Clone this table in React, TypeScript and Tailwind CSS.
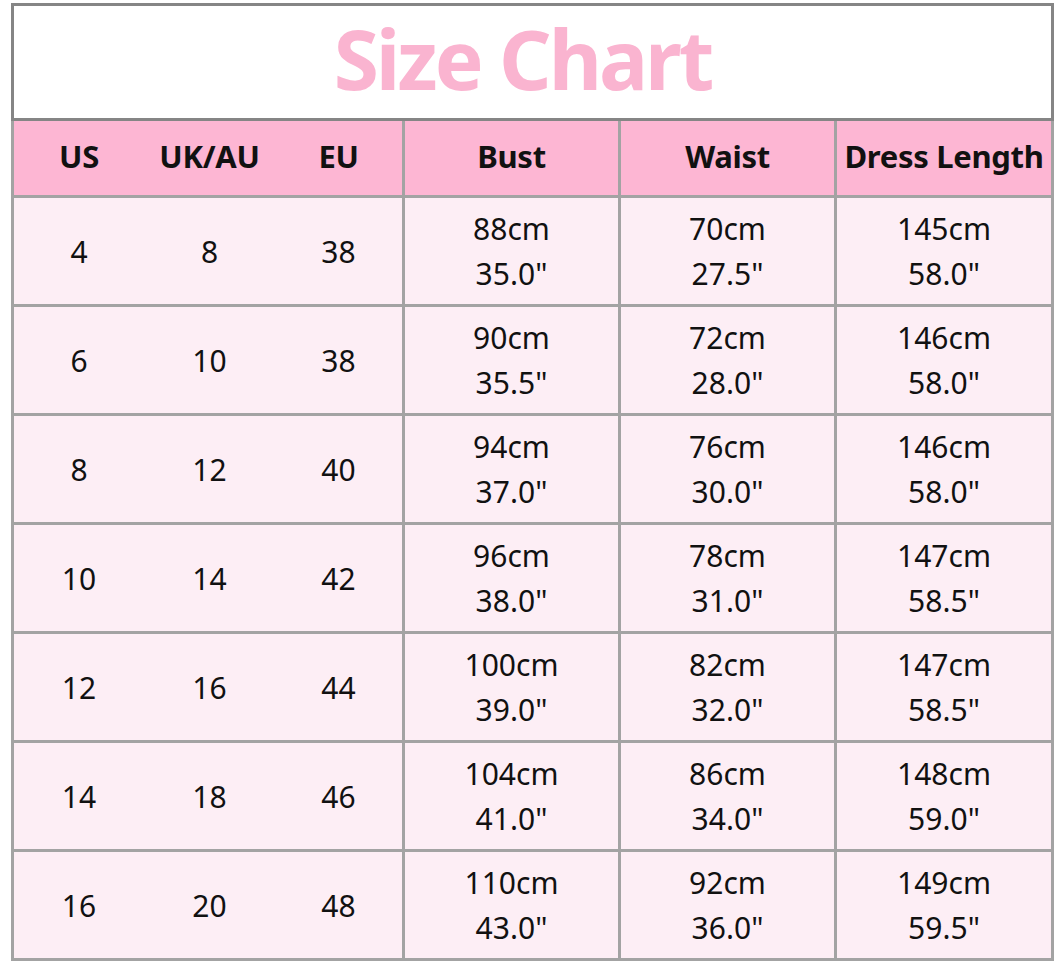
const rows = [
  { us: "4", uk: "8", eu: "38", bust: ["88cm", '35.0"'], waist: ["70cm", '27.5"'], length: ["145cm", '58.0"'] },
  { us: "6", uk: "10", eu: "38", bust: ["90cm", '35.5"'], waist: ["72cm", '28.0"'], length: ["146cm", '58.0"'] },
  { us: "8", uk: "12", eu: "40", bust: ["94cm", '37.0"'], waist: ["76cm", '30.0"'], length: ["146cm", '58.0"'] },
  { us: "10", uk: "14", eu: "42", bust: ["96cm", '38.0"'], waist: ["78cm", '31.0"'], length: ["147cm", '58.5"'] },
  { us: "12", uk: "16", eu: "44", bust: ["100cm", '39.0"'], waist: ["82cm", '32.0"'], length: ["147cm", '58.5"'] },
  { us: "14", uk: "18", eu: "46", bust: ["104cm", '41.0"'], waist: ["86cm", '34.0"'], length: ["148cm", '59.0"'] },
  { us: "16", uk: "20", eu: "48", bust: ["110cm", '43.0"'], waist: ["92cm", '36.0"'], length: ["149cm", '59.5"'] },
];

function TwoLine({ lines }: { lines: string[] }) {
  return (
    <div className="flex h-[106px] flex-col items-center justify-center bg-[#fdeef5] leading-[45px]">
      <span>{lines[0]}</span>
      <span>{lines[1]}</span>
    </div>
  );
}

export default function App() {
  return (
    <main className="min-h-screen bg-white font-['Noto_Sans',sans-serif] text-[#111]">
      <div className="ml-[11px] w-[1043px] pt-[3px]">
        {/* title */}
        <div className="flex h-[118px] items-center justify-center border-[3px] border-[#858585] bg-white pb-[8px] pr-[20px]">
          <h1 className="text-[82px] font-bold tracking-[-3px] text-[#fab4d0]">Size Chart</h1>
        </div>

        {/* table */}
        <div className="grid grid-cols-[388px_213px_213px_214px] gap-[3px] bg-[#a3a3a3] px-[3px] pb-[3px] text-[30px]">
          <div className="grid h-[74px] grid-cols-[130px_131px_127px] items-center bg-[#fdb6d3] pb-[3px] text-center text-[31px] font-bold tracking-[-0.3px]">
            <span>US</span>
            <span>UK/AU</span>
            <span>EU</span>
          </div>
          <div className="flex h-[74px] items-center justify-center bg-[#fdb6d3] pb-[3px] text-[31px] font-bold tracking-[-0.3px]">Bust</div>
          <div className="flex h-[74px] items-center justify-center bg-[#fdb6d3] pb-[3px] text-[31px] font-bold tracking-[-0.3px]">Waist</div>
          <div className="flex h-[74px] items-center justify-center whitespace-nowrap bg-[#fdb6d3] pb-[3px] text-[31px] font-bold tracking-[-0.3px]">
            Dress Length
          </div>

          {rows.map((r) => (
            <div key={r.us} className="contents">
              <div className="grid h-[106px] grid-cols-[130px_131px_127px] items-center bg-[#fdeef5] text-center">
                <span>{r.us}</span>
                <span>{r.uk}</span>
                <span>{r.eu}</span>
              </div>
              <TwoLine lines={r.bust} />
              <TwoLine lines={r.waist} />
              <TwoLine lines={r.length} />
            </div>
          ))}
        </div>
      </div>
    </main>
  );
}
